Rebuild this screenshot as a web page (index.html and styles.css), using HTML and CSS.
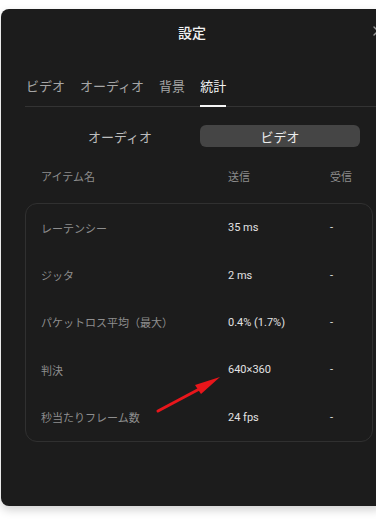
FILE: index.html
```html
<!DOCTYPE html>
<html lang="ja">
<head>
<meta charset="utf-8">
<link rel="stylesheet" href="styles.css">
</head>
<body>
<div class="modal">
  <div class="header">
    <span class="title">設定</span>
    <svg class="close" width="10" height="10" viewBox="0 0 10 10"><path d="M1 1L9 9M9 1L1 9" stroke="#9a9a9a" stroke-width="1.4" stroke-linecap="round"/></svg>
  </div>
  <div class="content">
    <div class="tabs">
      <span class="tab">ビデオ</span>
      <span class="tab">オーディオ</span>
      <span class="tab">背景</span>
      <span class="tab active">統計</span>
    </div>
    <div class="segment">
      <span class="seg">オーディオ</span>
      <span class="seg active">ビデオ</span>
    </div>
    <div class="grid head">
      <span>アイテム名</span><span>送信</span><span>受信</span>
    </div>
    <div class="card">
      <div class="grid row"><span class="label">レーテンシー</span><span class="val">35 ms</span><span class="val">-</span></div>
      <div class="grid row"><span class="label">ジッタ</span><span class="val">2 ms</span><span class="val">-</span></div>
      <div class="grid row"><span class="label">パケットロス平均（最大）</span><span class="val">0.4% (1.7%)</span><span class="val">-</span></div>
      <div class="grid row"><span class="label">判決</span><span class="val">640×360</span><span class="val">-</span></div>
      <div class="grid row"><span class="label">秒当たりフレーム数</span><span class="val">24 fps</span><span class="val">-</span></div>
    </div>
  </div>
</div>
<svg class="arrow" width="376" height="519" viewBox="0 0 376 519">
  <line x1="158" y1="411" x2="205" y2="386" stroke="#e8161b" stroke-width="3" stroke-linecap="round"/>
  <polygon points="220,377 195,385 201,394" fill="#e8161b"/>
</svg>
</body>
</html>
```
FILE: styles.css
```css
html, body {
  margin: 0;
  padding: 0;
  background: #ffffff;
  overflow: hidden;
  width: 376px;
  height: 519px;
}
body {
  position: relative;
  font-family: "Noto Sans CJK JP", "Noto Sans", sans-serif;
}
.modal {
  margin: 9px 0 0 1px;
  width: 382px;
  height: 497px;
  background: #1c1c1c;
  border-radius: 8px;
  box-shadow: 0 4px 10px rgba(0, 0, 0, 0.18);
  box-sizing: border-box;
}
.header {
  position: relative;
  height: 45px;
  display: flex;
  align-items: center;
  justify-content: center;
}
.title {
  color: #f2f2f2;
  font-size: 14px;
  font-weight: 500;
  line-height: 18px;
}
.close {
  position: absolute;
  left: 372px;
  top: 17px;
}
.content {
  padding: 23px 0 0 24px;
}
.tabs {
  display: flex;
  gap: 15px;
  border-bottom: 1px solid #333333;
  padding-left: 1px;
}
.tab {
  color: #a6a6a6;
  font-size: 13px;
  line-height: 18px;
  padding-bottom: 10px;
  border-bottom: 2px solid transparent;
  margin-bottom: -1px;
}
.tab.active {
  color: #f5f5f5;
  border-bottom-color: #f5f5f5;
}
.segment {
  display: grid;
  grid-template-columns: 1fr 1fr;
  width: 320px;
  margin: 18px 0 0 15px;
  height: 22px;
}
.seg {
  display: flex;
  align-items: center;
  justify-content: center;
  font-size: 13px;
  color: #bdbdbd;
  border-radius: 6px;
}
.seg.active {
  background: #454545;
  color: #ececec;
}
.grid {
  display: grid;
  grid-template-columns: 187px 102px 1fr;
  align-items: center;
}
.head {
  margin-top: 21px;
  padding-left: 16px;
  width: 348px;
  box-sizing: border-box;
  font-size: 11px;
  line-height: 16px;
  color: #8c8c8c;
}
.card {
  margin-top: 19px;
  width: 348px;
  height: 239px;
  box-sizing: border-box;
  border: 1px solid #303030;
  border-radius: 12px;
  display: flex;
  flex-direction: column;
}
.row {
  height: 47.4px;
  padding-left: 15px;
  font-size: 11px;
}
.label {
  color: #8e8e8e;
}
.val {
  color: #e2e2e2;
  font-family: "Roboto", "Noto Sans CJK JP", sans-serif;
}
.arrow {
  position: absolute;
  left: 0;
  top: 0;
  pointer-events: none;
}
```
